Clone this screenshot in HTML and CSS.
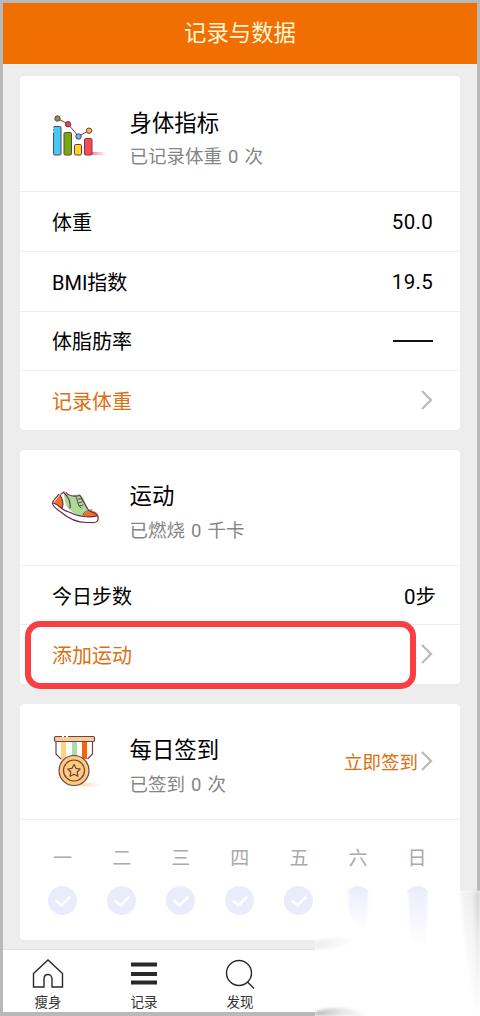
FILE: index.html
```html
<!DOCTYPE html>
<html lang="zh-CN">
<head>
<meta charset="utf-8">
<title>记录与数据</title>
<link rel="stylesheet" href="styles.css">
</head>
<body>
<div class="screen">
  <header class="topbar">记录与数据</header>
  <main class="content">
    <section class="card">
      <div class="summary">
        <svg class="art" viewBox="0 0 80 70">
          <defs><linearGradient id="redshade"><stop stop-color="#ef5260" stop-opacity=".75"/><stop offset="1" stop-color="#ef5260" stop-opacity="0"/></linearGradient></defs>
          <path d="M51 52h15v3H51z" fill="url(#redshade)"/>
          <g stroke="#6b3a59" stroke-width="1">
            <rect x="13.5" y="26.5" width="7.5" height="28.5" rx="1.2" fill="#3dcdf5"/>
            <rect x="24" y="32.5" width="7.5" height="22.5" rx="1.2" fill="#72ac0b"/>
            <rect x="34.5" y="44.5" width="7" height="10.5" rx="1.2" fill="#ffd51c"/>
            <rect x="44.5" y="38.5" width="7.5" height="16.5" rx="1.2" fill="#fc4b50"/>
            <path d="M17.5 18.5 28 24l10.5 12.5L49 30.5" fill="none"/>
            <circle cx="17.5" cy="18.5" r="2.7" fill="#7b9e25"/>
            <circle cx="28" cy="24.2" r="2.7" fill="#ed3e50"/>
            <circle cx="38.5" cy="36.5" r="2.7" fill="#59bce9"/>
            <circle cx="49" cy="30.7" r="2.7" fill="#f5bd2d"/>
          </g>
          <path d="M13 27.5v5" stroke="#fff" stroke-width="1.5" stroke-dasharray="2 1"/>
        </svg>
        <div class="heading"><h2>身体指标</h2><p>已记录体重 0 次</p></div>
      </div>
      <div class="row"><span>体重</span><span class="value">50.0</span></div>
      <div class="row"><span>BMI指数</span><span class="value">19.5</span></div>
      <div class="row"><span>体脂肪率</span><span class="dash"></span></div>
      <div class="row action"><span>记录体重</span><svg class="chevron" viewBox="0 0 12 20"><path d="m1 1 9 9-9 9"/></svg></div>
    </section>

    <section class="card">
      <div class="summary">
        <svg class="art" viewBox="0 0 80 70">
          <ellipse cx="54" cy="48" rx="10" ry="2" fill="#fff0e3"/>
          <path d="M19 21c-3 4-7 6-6.500 9 .5 3 6 6 11 10 7 6 13 8 23 8h7c4 0 5-2 4.500-6-2-4-9-4-11-8-3-4-5-9-7-13-5 0-11 0-14-3-2 0-4 0-7 3z" fill="#fff"/>
          <path d="M24 19c4 2 10 3 15 1 4 1 6 9 9 14-1 3-5 4-5 8-6 0-10-3-14-7-4-3-5-11-5-16z" fill="#aadc96"/>
          <path d="M20 21c-2 3-5 5-6 8l8 6c2-4 1-10-2-14zM43 42c1-4 5-6 9-5 4 0 6 3 6 5-5 1-10 1-15 0z" fill="#f5701d"/>
          <g fill="none" stroke="#642e50" stroke-width="1.2" stroke-linecap="round" stroke-linejoin="round">
            <path d="M18.500 20.500c-2 4-6 5-6 9 0 3 5 6 9 9 7 6 14 10 25 10h7c4 0 5-2 4.500-6-1-4-8-4-10-7-3-4-5-10-8-14-5 1-11 1-14-3M21 20l3-2"/>
            <path d="M13 29c6 1 9 8 16 9 8 4 18 6 28 4M24 19c4 3 7 9 6 15M20 21c3 5 4 9 2 13"/>
            <path d="M36 23c2 4 1 7 5 11M38 25h4m-4 4 4-1m-3 4 4-1M43 41c1-4 5-5 9-5" stroke-width=".9"/>
          </g>
        </svg>
        <div class="heading"><h2>运动</h2><p>已燃烧 0 千卡</p></div>
      </div>
      <div class="row"><span>今日步数</span><span class="value steps">0步</span></div>
      <div class="row action"><span>添加运动</span><svg class="chevron" viewBox="0 0 12 20"><path d="m1 1 9 9-9 9"/></svg><div class="highlight"></div></div>
    </section>

    <section class="card">
      <div class="summary">
        <svg class="art" viewBox="0 0 80 70">
          <defs><linearGradient id="goldshade"><stop stop-color="#ffdaa0"/><stop offset="1" stop-color="#ffdaa0" stop-opacity="0"/></linearGradient></defs>
          <ellipse cx="50" cy="56.5" rx="11" ry="2" fill="url(#goldshade)"/>
          <path d="M16 14h37v12l-10 8H26L16 27z" fill="#fff"/>
          <path d="M21 14h5v18h-5z" fill="#fad386"/><path d="M32 14h5v18h-5z" fill="#a8dcaa"/><path d="M42 14h5v17h-5z" fill="#fb620b"/>
          <g stroke="#703f50" stroke-width="1.2" stroke-linejoin="round">
            <path d="M16 13v13l5 5M52.500 13v13l-5 5" fill="none"/>
            <rect x="14.5" y="8.5" width="40" height="5" rx="1.2" fill="#f6cf92"/>
            <circle cx="34" cy="42.500" r="15" fill="#fdcc78"/><circle cx="34" cy="42.500" r="10.5" fill="none"/>
            <path d="m34 36.500 2 3.800 4.200.7-3 3 .7 4.300-3.900-2-3.900 2 .7-4.300-3-3 4.200-.7z" fill="none"/>
          </g><path d="M22 8.500h2m2 0h2" stroke="#fff" stroke-width="1.5"/>
        </svg>
        <div class="heading"><h2>每日签到</h2><p>已签到 0 次</p></div>
        <div class="signin"><span>立即签到</span><svg class="chevron" viewBox="0 0 12 20"><path d="m1 1 9 9-9 9"/></svg></div>
      </div>
      <div class="week">
        <div class="day"><span>一</span><svg class="check" viewBox="0 0 30 30"><path d="m8 15 6 5 9-9"/></svg></div>
        <div class="day"><span>二</span><svg class="check" viewBox="0 0 30 30"><path d="m8 15 6 5 9-9"/></svg></div>
        <div class="day"><span>三</span><svg class="check" viewBox="0 0 30 30"><path d="m8 15 6 5 9-9"/></svg></div>
        <div class="day"><span>四</span><svg class="check" viewBox="0 0 30 30"><path d="m8 15 6 5 9-9"/></svg></div>
        <div class="day"><span>五</span><svg class="check" viewBox="0 0 30 30"><path d="m8 15 6 5 9-9"/></svg></div>
        <div class="day"><span>六</span></div>
        <div class="day"><span>日</span></div>
      </div>
    </section>
  </main>
  <nav class="tabs">
    <div class="tab"><svg viewBox="0 0 32 30"><path d="M1.500 14.500 16 1l14.500 13.500V28H20V20c0-6-8-6-8 0v8H1.500z"/></svg><span>瘦身</span></div>
    <div class="tab"><svg viewBox="0 0 32 30"><path class="bars" d="M3 5.500h26M3 15h26M3 23.500h26"/></svg><span>记录</span></div>
    <div class="tab"><svg viewBox="0 0 32 30"><circle cx="15" cy="14" r="12.500"/><path d="m23.500 23 6.500 6.500"/></svg><span>发现</span></div>
  </nav>
  <svg class="fade" viewBox="0 0 165 130">
    <defs>
      <linearGradient id="g1"><stop stop-color="#ededed"/><stop offset="1" stop-color="#fff"/></linearGradient>
      <linearGradient id="g2"><stop stop-color="#b9b9b9"/><stop offset=".45" stop-color="#e4e4e4"/><stop offset="1" stop-color="#fff"/></linearGradient>
      <linearGradient id="g3"><stop stop-color="#fff"/><stop offset=".3" stop-color="#f1f1f1"/><stop offset=".7" stop-color="#ebebeb"/><stop offset="1" stop-color="#c4c4c4"/></linearGradient>
      <linearGradient id="g4" x1="0" x2="0" y1="0" y2="1"><stop stop-color="#fff" stop-opacity="0"/><stop offset=".35" stop-color="#fff" stop-opacity=".5"/><stop offset="1" stop-color="#fff"/></linearGradient>
      <linearGradient id="g5" x1="0" x2="0" y1="0" y2="1"><stop stop-color="#ebecfb"/><stop offset=".5" stop-color="#f4f5ff"/><stop offset="1" stop-color="#fff"/></linearGradient>
      <filter id="soft" x="-20%" y="-50%" width="140%" height="200%"><feGaussianBlur stdDeviation="1.8"/></filter>
    </defs>
    <path d="M0 53h141V5h24v125H0z" fill="#fff"/>
    <path d="M0 55c15-3 24-4 38-2 3 3-1 5-8 7-8 2-18 3-30 3z" fill="url(#g1)" filter="url(#soft)"/>
    <path d="M0 126c12-4 24-5 36-3l20 7H0z" fill="url(#g2)" filter="url(#soft)"/>
    <path d="M145 5h20v125h-4c-5-25-10-75-18-125z" fill="url(#g3)" filter="url(#soft)"/>
    <path d="M138 5h27v125h-27z" fill="url(#g4)"/>
    <path d="M32.500 5Q43-5 53.500 5l1 20-5 18Q34 34 32 19z" fill="url(#g5)"/>
    <path d="M92 5q10.500-10 21 0l-1 54H97z" fill="url(#g5)"/>
    <path d="M31 6v37M55 6v37M91 6v51M115 6v51" stroke="#fff" stroke-width="5" filter="url(#soft)"/>
  </svg>
</div>
</body>
</html>
```
FILE: styles.css
```css
* { box-sizing: border-box; }
body { margin: 0; }
.screen { position: relative; width: 480px; height: 1016px; display: flex; flex-direction: column; border: 3px solid #b9b9b9; border-bottom-width: 4px; background: #ededed; color: #000; font-family: Roboto, "Noto Sans CJK SC", sans-serif; }
.topbar { height: 61px; flex: none; display: flex; align-items: center; justify-content: center; padding-bottom: 5px; background: #f06f00; color: #fff5d7; font-size: 22.4px; }
.content { flex: 1; min-height: 0; display: flex; flex-direction: column; gap: 19.5px; padding: 11px 17px 0; border-top: 1px solid #f8f5f2; }
.card { flex: none; background: #fff; border-radius: 4px; }
.summary { display: flex; height: 115px; padding: 24px 27px 0 20px; }
.art { flex: none; width: 80px; height: 70px; }
.heading { padding-left: 9.5px; padding-top: 6.5px; flex: 1; }
.heading h2 { margin: 0; font-size: 22.4px; line-height: 33px; font-weight: 400; }
.heading p { margin: 3.5px 0 0; font-size: 18.5px; line-height: 28px; color: #858585; word-spacing: 1.5px; }
.row { position: relative; display: flex; align-items: center; justify-content: space-between; height: 59.8px; padding: 1px 27px 1px 32px; border-top: 1.5px solid #ededed; font-size: 20px; }
.value { font-size: 20.5px; letter-spacing: .3px; padding-top: 1px; }
.steps { margin-right: -3px; letter-spacing: 0; padding-top: 0; }
.dash { width: 40px; height: 2px; background: #111; }
.action, .signin { color: #db7010; }
.chevron { width: 12px; height: 20px; flex: none; fill: none; stroke: #bbb; stroke-width: 2.3; }
.action .chevron { margin-bottom: 2px; }
.highlight { position: absolute; left: 5px; top: -4px; width: 391px; height: 68px; border: 6px solid #f93f41; border-radius: 15px; }
.signin { display: flex; align-items: center; gap: 3px; height: 67px; font-size: 18.5px; }
.week { display: grid; grid-template-columns: repeat(7, 59.1px); height: 121px; padding: 23px 13px 0; border-top: 1.5px solid #ededed; }
.day { display: flex; flex-direction: column; align-items: center; color: #aaa; font-size: 19px; line-height: 32px; }
.check { width: 29px; height: 29px; margin-top: 11.5px; border-radius: 50%; background: #ebecfb; fill: none; stroke: #fff; stroke-width: 2.8; }
.tabs { display: flex; flex: none; height: 63px; background: #fff; border-top: 1px solid #e3e3e3; }
.tab { width: 96px; padding: 9px 6px 0 0; display: flex; flex-direction: column; align-items: center; font-size: 13.5px; line-height: 20px; color: #333; }
.tab:first-child { padding-right: 6px; }
.tab svg { width: 32px; height: 30px; flex: none; fill: none; stroke: #292929; stroke-width: 1.4; }
.tab .bars { stroke-width: 4; }
.tab span { margin-top: 2.5px; }
.fade { position: absolute; right: -3px; bottom: -4px; width: 165px; height: 130px; }
```
